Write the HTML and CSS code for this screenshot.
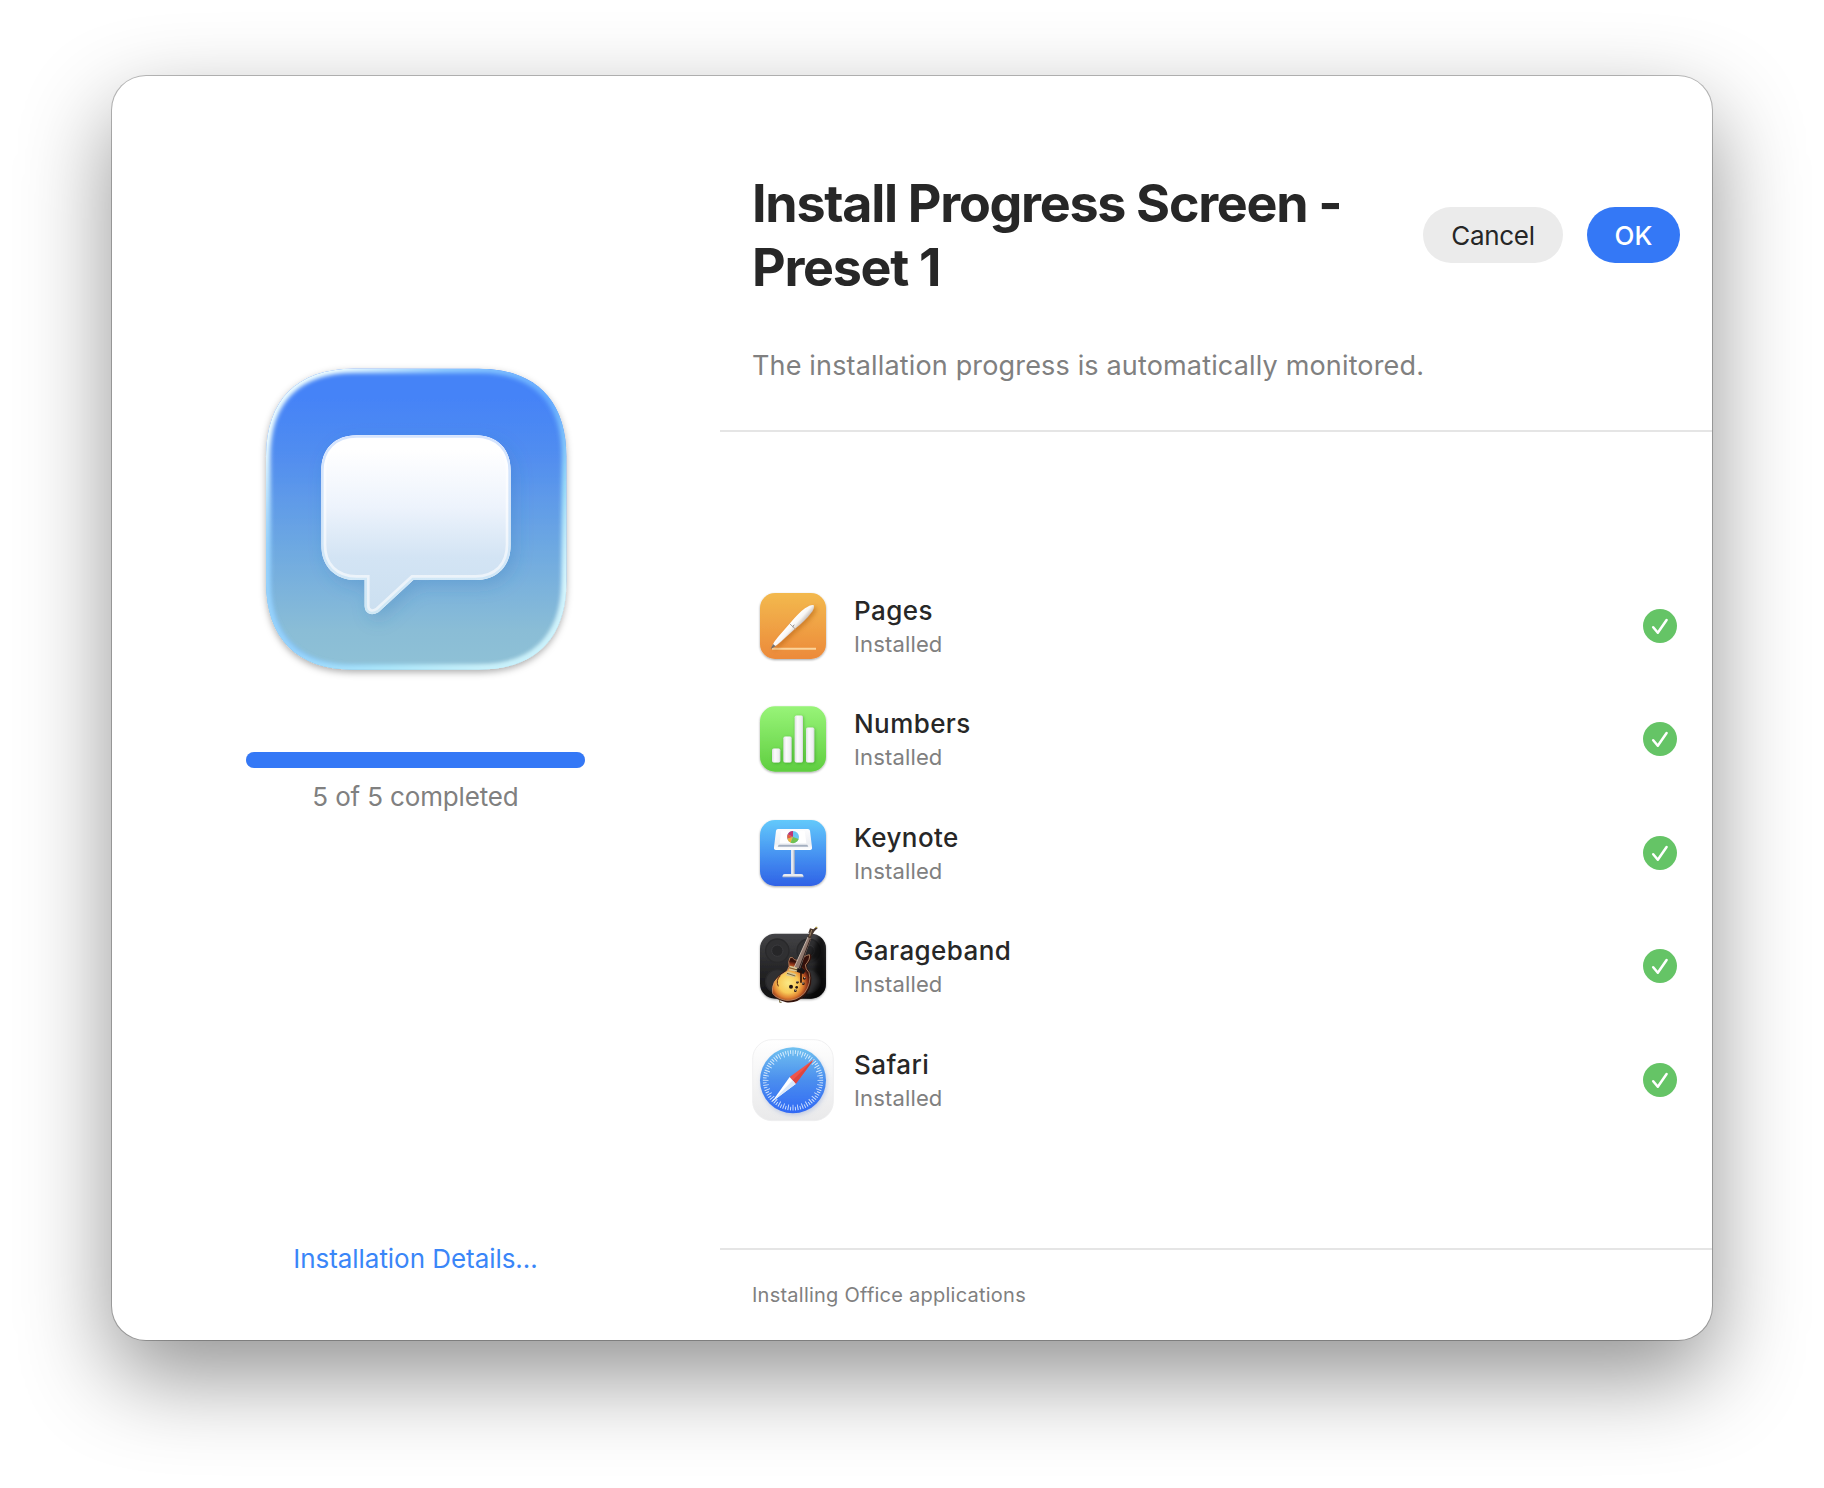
FILE: index.html
```html
<!DOCTYPE html>
<html lang="en">
<head>
<meta charset="utf-8">
<title>Install Progress</title>
<link rel="stylesheet" href="styles.css">
</head>
<body>
<main class="window">
  <aside class="sidebar">
    <svg class="hero" viewBox="0 0 1050 1050">
      <defs>
        <linearGradient id="heroBg" x1="0" y1="0" x2="0" y2="1"><stop offset=".1" stop-color="#4583f7"/><stop offset=".3" stop-color="#528eef"/><stop offset=".6" stop-color="#6ea9e1"/><stop offset=".87" stop-color="#8abdd6"/><stop offset="1" stop-color="#8fc1d6"/></linearGradient>
        <linearGradient id="heroRim" x1="0" y1="0" x2="1" y2="1"><stop offset=".12" stop-color="#f0ffff"/><stop offset=".3" stop-color="#8ecbff"/><stop offset=".52" stop-color="#64abff"/><stop offset=".7" stop-color="#9adcf8"/><stop offset=".86" stop-color="#efffff"/></linearGradient>
        <linearGradient id="heroRimLow" x1="0" y1="0" x2="0" y2="1"><stop offset=".3" stop-color="#b4ebfb" stop-opacity="0"/><stop offset="1" stop-color="#b4ebfb" stop-opacity=".7"/></linearGradient>
        <linearGradient id="bubbleFill" x1="0" y1="0" x2="0" y2="1"><stop offset=".08" stop-color="#fff"/><stop offset=".4" stop-color="#edf3fc"/><stop offset=".68" stop-color="#d3e4f4"/><stop offset="1" stop-color="#cbdff0"/></linearGradient>
        <linearGradient id="bubbleRim" x1="0" y1="0" x2="0" y2="1"><stop offset="0" stop-color="#d5e4fe"/><stop offset="1" stop-color="#cfe8f5"/></linearGradient>
        <filter id="heroShadow" x="-10%" y="-10%" width="120%" height="125%"><feDropShadow dx="0" dy="8" stdDeviation="11" flood-opacity=".32"/></filter>
        <filter id="bubbleShadow" x="-20%" y="-20%" width="140%" height="150%"><feDropShadow dx="14" dy="18" stdDeviation="26" flood-color="#2e6fb0" flood-opacity=".24"/></filter>
        <filter id="soft" x="-10%" y="-10%" width="120%" height="120%"><feGaussianBlur stdDeviation="6"/></filter>
        <path id="heroShape" d="M340 56H716C885 56 979 150 979 319V696C979 865 885 959 716 959H340C171 959 78 865 78 696V319C78 150 171 56 340 56Z"/>
        <path id="bubbleShape" d="M350 256H706C772 256 812 298 812 362V584C812 648 772 690 706 690H520L416 786Q404 794 392 792Q374 788 374 768V690H350C284 690 244 648 244 584V362C244 298 284 256 350 256Z"/>
        <clipPath id="heroClip"><use href="#heroShape"/></clipPath>
        <clipPath id="bubbleClip"><use href="#bubbleShape"/></clipPath>
      </defs>
      <use href="#heroShape" fill="url(#heroBg)" filter="url(#heroShadow)"/>
      <g clip-path="url(#heroClip)" fill="none" stroke-width="26"><use href="#heroShape" stroke="url(#heroRim)" filter="url(#soft)"/><use href="#heroShape" stroke="url(#heroRimLow)" filter="url(#soft)"/></g>
      <use href="#bubbleShape" fill="url(#bubbleFill)" filter="url(#bubbleShadow)"/>
      <g clip-path="url(#bubbleClip)" fill="none"><use href="#bubbleShape" stroke="#fff" stroke-opacity=".6" stroke-width="30"/><use href="#bubbleShape" stroke="url(#bubbleRim)" stroke-width="14"/></g>
    </svg>
    <div class="progress"><div class="progress-fill"></div></div>
    <p class="progress-label">5 of 5 completed</p>
    <a class="details">Installation Details...</a>
  </aside>
  <section class="content">
    <header class="header">
      <div class="title-row">
        <h1 class="title">Install Progress Screen -<br>Preset 1</h1>
        <div class="actions">
          <button class="button cancel">Cancel</button>
          <button class="button ok">OK</button>
        </div>
      </div>
      <p class="subtitle">The installation progress is automatically monitored.</p>
    </header>
    <ul class="list">
      <li class="item">
        <svg class="app" viewBox="39 18 240 240">
          <defs>
            <linearGradient id="pg" x1="0" y1="0" x2="0" y2="1"><stop stop-color="#f3b94e"/><stop offset="1" stop-color="#ec8a3a"/></linearGradient>
            <linearGradient id="pen" gradientUnits="userSpaceOnUse" x1="148" y1="132" x2="168" y2="150"><stop stop-color="#fff"/><stop offset=".5" stop-color="#f8f6f4"/><stop offset="1" stop-color="#c9c2bc"/></linearGradient>
            <filter id="iconShadow" x="-10%" y="-10%" width="120%" height="125%"><feDropShadow dx="0" dy="3" stdDeviation="2.5" flood-opacity=".35"/></filter>
            <filter id="penShadow" x="-20%" y="-20%" width="150%" height="150%"><feDropShadow dx="8" dy="6" stdDeviation="6" flood-color="#a04a00" flood-opacity=".4"/></filter>
          </defs>
          <rect x="60" y="39" width="198" height="198" rx="45" fill="url(#pg)" filter="url(#iconShadow)"/>
          <path d="M96 203H228V209H96Z" fill="#fbd49b"/>
          <g filter="url(#penShadow)">
            <path d="M221 75Q225 84 213 99Q196 122 164 147L124 184Q110 197 99 202L96 199Q101 186 114 171L150 130Q177 98 195 85Q212 73 221 75Z" fill="url(#pen)"/>
            <path d="M149 131L166 147" stroke="#aaa29c" stroke-width="3"/>
            <path d="M99 192L107 199L92 207Z" fill="#77706a"/>
            <path d="M158 140L163 135" stroke="#73706e" stroke-width="3"/>
          </g>
        </svg>
        <div class="text"><span class="name">Pages</span><span class="status">Installed</span></div>
        <svg class="check" viewBox="0 0 34 34"><circle cx="17" cy="17" r="17" fill="#65c466"/><path d="M10.2 18.2L14.8 23.8L23.6 11" fill="none" stroke="#fff" stroke-width="2.5" stroke-linecap="round" stroke-linejoin="round"/></svg>
      </li>
      <li class="item">
        <svg class="app" viewBox="39 358.5 240 240">
          <defs>
            <linearGradient id="nb" x1="0" y1="0" x2="0" y2="1"><stop stop-color="#98f478"/><stop offset="1" stop-color="#5fce40"/></linearGradient>
            <linearGradient id="bar" x1="0" y1="0" x2="1" y2="0"><stop stop-color="#dfe0e3"/><stop offset=".35" stop-color="#fbfbfc"/><stop offset=".8" stop-color="#eeeff1"/><stop offset="1" stop-color="#d3d6d8"/></linearGradient>
            <filter id="barShadow" x="-20%" y="-20%" width="150%" height="140%"><feDropShadow dx="2" dy="2" stdDeviation="4" flood-color="#17700b" flood-opacity=".4"/></filter>
          </defs>
          <rect x="60" y="380.5" width="198" height="196" rx="45" fill="url(#nb)" filter="url(#iconShadow)"/>
          <g fill="url(#bar)" filter="url(#barShadow)">
            <rect x="96" y="507" width="25" height="42" rx="5"/><rect x="130" y="471" width="25" height="78" rx="5"/><rect x="164" y="408" width="25" height="141" rx="5"/><rect x="198" y="444" width="25" height="105" rx="5"/>
          </g>
        </svg>
        <div class="text"><span class="name">Numbers</span><span class="status">Installed</span></div>
        <svg class="check" viewBox="0 0 34 34"><circle cx="17" cy="17" r="17" fill="#65c466"/><path d="M10.2 18.2L14.8 23.8L23.6 11" fill="none" stroke="#fff" stroke-width="2.5" stroke-linecap="round" stroke-linejoin="round"/></svg>
      </li>
      <li class="item">
        <svg class="app" viewBox="39 39 240 240">
          <defs>
            <linearGradient id="kn" x1="0" y1="0" x2="0" y2="1"><stop stop-color="#63c9fb"/><stop offset=".5" stop-color="#4795f2"/><stop offset="1" stop-color="#2f62e6"/></linearGradient>
            <linearGradient id="podium" x1="0" y1="0" x2="0" y2="1"><stop stop-color="#fdfdfe"/><stop offset=".7" stop-color="#eef0f4"/><stop offset="1" stop-color="#fff"/></linearGradient>
            <linearGradient id="pole" x1="0" y1="0" x2="1" y2="0"><stop stop-color="#fff"/><stop offset=".5" stop-color="#dde1e8"/><stop offset="1" stop-color="#9aa7bd"/></linearGradient>
          </defs>
          <rect x="60" y="60" width="198" height="198" rx="45" fill="url(#kn)" filter="url(#iconShadow)"/>
          <rect x="153.500" y="146" width="11" height="80" fill="url(#pole)"/>
          <path d="M134 222H184Q190 222 190 227V231H128V227Q128 222 134 222Z" fill="#e9ecf1"/><path d="M128 229H190V232H128Z" fill="#a6b2ca"/>
          <path d="M114 87H204Q209 87 210 92L216 142Q217 150 210 150H108Q101 150 102 142L108 92Q109 87 114 87Z" fill="url(#podium)"/>
          <path d="M124 92H194L199 130H119Z" fill="#fff"/>
          <path d="M116 134H202L205 140H113Z" fill="#a4afbf"/>
          <circle cx="159" cy="111" r="18" fill="#6ac6f3"/>
          <path d="M159 111V93A18 18 0 0 0 143 103Z" fill="#c13673"/><path d="M159 111L143 103A18 18 0 0 0 142 116Z" fill="#ea5b3d"/><path d="M159 111L142 116A18 18 0 0 0 152 128Z" fill="#f3b33c"/><path d="M159 111L152 128A18 18 0 0 0 176 117Z" fill="#72c350"/>
        </svg>
        <div class="text"><span class="name">Keynote</span><span class="status">Installed</span></div>
        <svg class="check" viewBox="0 0 34 34"><circle cx="17" cy="17" r="17" fill="#65c466"/><path d="M10.2 18.2L14.8 23.8L23.6 11" fill="none" stroke="#fff" stroke-width="2.5" stroke-linecap="round" stroke-linejoin="round"/></svg>
      </li>
      <li class="item">
        <svg class="app" viewBox="39 379 240 240">
          <defs>
            <linearGradient id="gb" x1="0" y1="0" x2="0" y2="1"><stop stop-color="#434346"/><stop offset=".5" stop-color="#28282a"/><stop offset="1" stop-color="#111112"/></linearGradient>
            <radialGradient id="burst" gradientUnits="userSpaceOnUse" cx="145" cy="550" r="66"><stop stop-color="#fbe884"/><stop offset=".45" stop-color="#f8ca58"/><stop offset=".68" stop-color="#e08232"/><stop offset=".86" stop-color="#96371a"/><stop offset="1" stop-color="#35100a"/></radialGradient>
            <clipPath id="gbClip"><rect x="60" y="402" width="198" height="195" rx="45"/></clipPath>
            <filter id="blur6"><feGaussianBlur stdDeviation="6"/></filter>
          </defs>
          <rect x="60" y="402" width="198" height="195" rx="45" fill="url(#gb)" filter="url(#iconShadow)"/>
          <g clip-path="url(#gbClip)">
            <g fill="#303032" stroke="#29292b" stroke-width="4"><circle cx="112" cy="453" r="35"/><circle cx="206" cy="453" r="35"/><circle cx="112" cy="545" r="35"/><circle cx="206" cy="545" r="35"/></g>
            <g fill="#262628" stroke="#3b3b3e" stroke-width="3"><circle cx="112" cy="453" r="17"/><circle cx="206" cy="453" r="17"/></g>
            <path d="M240 400L208 482L232 480L222 512L236 545L205 597L160 610L258 610V400Z" fill="#000" opacity=".65" filter="url(#blur6)"/>
          </g>
          <path d="M150 474Q158 468 164 478Q174 482 184 482Q192 464 213 464Q219 478 200 497Q200 508 211 519Q222 552 197 586Q172 612 138 608Q108 600 98 586Q92 566 102 545Q112 526 141 511Q148 496 144 484Z" fill="#32120b"/>
          <path d="M150 474Q158 470 163 480L183 485Q190 468 208 465Q212 478 196 496Q196 508 207 519Q216 549 193 581Q169 605 136 602Q108 596 98 581Q94 564 103 546Q115 528 141 514Q151 500 146 486Z" fill="url(#burst)" stroke="#d8a780" stroke-width="2"/>
          <path d="M178 480L190 486L185 503L197 514L190 523L165 515Z" fill="#171516"/>
          <path d="M204 412L214 416L180 507L163 502Z" fill="#8f786e"/><path d="M204 412L163 502" stroke="#d9c8bb" stroke-width="2.500"/><path d="M211 418L177 507" stroke="#33241f" stroke-width="3"/>
          <path d="M210 386L220 389L229 381L233 386L224 394L217 405L211 417L203 412L209 399L205 400Z" fill="#4a382e"/><path d="M215 391L209 410" stroke="#b19772" stroke-width="2.500"/><path d="M226 383H232" stroke="#c2ae45" stroke-width="3"/>
          <path d="M149 501L172 507M147 509L171 514M142 518L168 526M139 525L164 530" stroke="#d6c695" stroke-width="5"/><path d="M148 504L172 511M141 521L166 529" stroke="#615133" stroke-width="2.500"/>
          <path d="M183 513V549" stroke="#2a1008" stroke-width="5"/><path d="M121 528Q106 542 115 560" stroke="#5e210e" stroke-width="3" fill="none"/>
          <g fill="#201311"><circle cx="172" cy="548" r="4"/><circle cx="193" cy="536" r="4"/><circle cx="153" cy="561" r="6"/><circle cx="190" cy="552" r="4"/><circle cx="170" cy="563" r="4"/><circle cx="166" cy="573" r="4"/></g>
          <g fill="#e4ceb0"><circle cx="171" cy="546" r="2"/><circle cx="194" cy="534" r="2"/><circle cx="189" cy="550" r="2"/><circle cx="166" cy="571" r="2"/></g>
          <path d="M119 600V608H125" stroke="#766a42" stroke-width="3" fill="none"/>
        </svg>
        <div class="text"><span class="name">Garageband</span><span class="status">Installed</span></div>
        <svg class="check" viewBox="0 0 34 34"><circle cx="17" cy="17" r="17" fill="#65c466"/><path d="M10.2 18.2L14.8 23.8L23.6 11" fill="none" stroke="#fff" stroke-width="2.5" stroke-linecap="round" stroke-linejoin="round"/></svg>
      </li>
      <li class="item">
        <svg class="app" viewBox="39 719 240 240">
          <defs>
            <linearGradient id="sfBg" x1="0" y1="0" x2="0" y2="1"><stop stop-color="#fff"/><stop offset="1" stop-color="#e9e9ea"/></linearGradient>
            <linearGradient id="sf" x1="0" y1="0" x2="0" y2="1"><stop stop-color="#70c1f0"/><stop offset=".5" stop-color="#4b8eee"/><stop offset="1" stop-color="#3069f5"/></linearGradient>
            <filter id="dialShadow" x="-20%" y="-20%" width="140%" height="140%"><feDropShadow dx="3" dy="6" stdDeviation="6" flood-color="#6d8fd0" flood-opacity=".35"/></filter>
          </defs>
          <rect x="38" y="718" width="242" height="243" rx="58" fill="url(#sfBg)" stroke="#ededee" stroke-width="2.5"/>
          <circle cx="159" cy="840" r="99" fill="url(#sf)" filter="url(#dialShadow)"/>
          <g fill="none" stroke="#e8f3ff" stroke-opacity=".85"><circle cx="159" cy="840" r="82" stroke-width="17" pathLength="360" stroke-dasharray="2 8" stroke-dashoffset="1"/><circle cx="159" cy="840" r="85" stroke-width="11" pathLength="360" stroke-dasharray="2 8" stroke-dashoffset="-4"/></g>
          <path d="M222 777L167 851L149 830Z" fill="#f0544b"/><path d="M222 777L167 851L158 840Z" fill="#dd4640"/>
          <path d="M149 830L167 851L96 904Z" fill="#fff"/><path d="M158 840L167 851L96 904Z" fill="#dce9fb"/>
        </svg>
        <div class="text"><span class="name">Safari</span><span class="status">Installed</span></div>
        <svg class="check" viewBox="0 0 34 34"><circle cx="17" cy="17" r="17" fill="#65c466"/><path d="M10.2 18.2L14.8 23.8L23.6 11" fill="none" stroke="#fff" stroke-width="2.5" stroke-linecap="round" stroke-linejoin="round"/></svg>
      </li>
    </ul>
    <footer class="footer">Installing Office applications</footer>
  </section>
</main>
</body>
</html>
```
FILE: styles.css
```css
* { box-sizing: border-box; margin: 0; padding: 0; }
body {
  width: 1824px;
  height: 1488px;
  padding: 76px 112px 148px;
  background: #fff;
  color: #272727;
  font-family: Inter, "Liberation Sans", sans-serif;
  overflow: hidden;
}
.window {
  display: flex;
  width: 1600px;
  height: 1264px;
  border-radius: 34px;
  background: #fff;
  box-shadow: 0 0 0 1px rgba(0, 0, 0, .25), 0 36px 90px rgba(0, 0, 0, .43);
}
.sidebar {
  display: flex;
  flex-direction: column;
  align-items: center;
  width: 608px;
  padding: 274px 1px 65px 0;
}
.hero { display: block; width: 350px; height: 350px; margin-right: 2px; }
.progress { width: 339px; height: 16px; margin-top: 52px; border-radius: 8px; background: #e5e5e5; }
.progress-fill { width: 100%; height: 100%; border-radius: 8px; background: #3478f6; }
.progress-label { margin-top: 13px; color: #808080; font-size: 26px; line-height: 32px; letter-spacing: -.15px; }
.details { margin-top: auto; color: #3a86f8; font-size: 26px; line-height: 32px; letter-spacing: -.05px; }
.content { display: flex; flex-direction: column; width: 992px; }
.header { height: 356px; padding: 94px 32px 0; border-bottom: 2px solid #e5e5e5; }
.title-row { display: flex; align-items: center; justify-content: space-between; }
.title { padding-top: 2px; font-size: 52px; line-height: 64px; font-weight: 700; letter-spacing: -1.28px; white-space: nowrap; }
.actions { display: flex; gap: 24px; }
.button { height: 56px; padding-top: 2px; border: 0; border-radius: 28px; font: 26px/54px Inter, "Liberation Sans", sans-serif; }
.cancel { width: 140px; background: #ebebeb; color: #262626; letter-spacing: -.3px; }
.ok { width: 93px; background: #3478f6; color: #fff; font-weight: 500; }
.subtitle { margin-top: 50px; color: #808080; font-size: 27px; line-height: 32px; letter-spacing: .16px; }
.list { display: flex; flex-direction: column; gap: 33.4px; height: 816px; padding: 154px 35px 0 33px; list-style: none; }
.item { display: flex; align-items: center; height: 80px; flex: none; }
.app { width: 80px; height: 80px; overflow: visible; }
.text { display: flex; flex-direction: column; align-items: flex-start; flex: 1; margin-left: 21px; }
.name { font-size: 26px; line-height: 36px; font-weight: 500; letter-spacing: .42px; }
.status { color: #808080; font-size: 22px; line-height: 30px; letter-spacing: .15px; }
.check { width: 34px; height: 34px; }
.footer { height: 92px; padding: 33px 32px 0; border-top: 2px solid #e5e5e5; color: #808080; font-size: 20px; line-height: 24px; letter-spacing: .24px; }
```
